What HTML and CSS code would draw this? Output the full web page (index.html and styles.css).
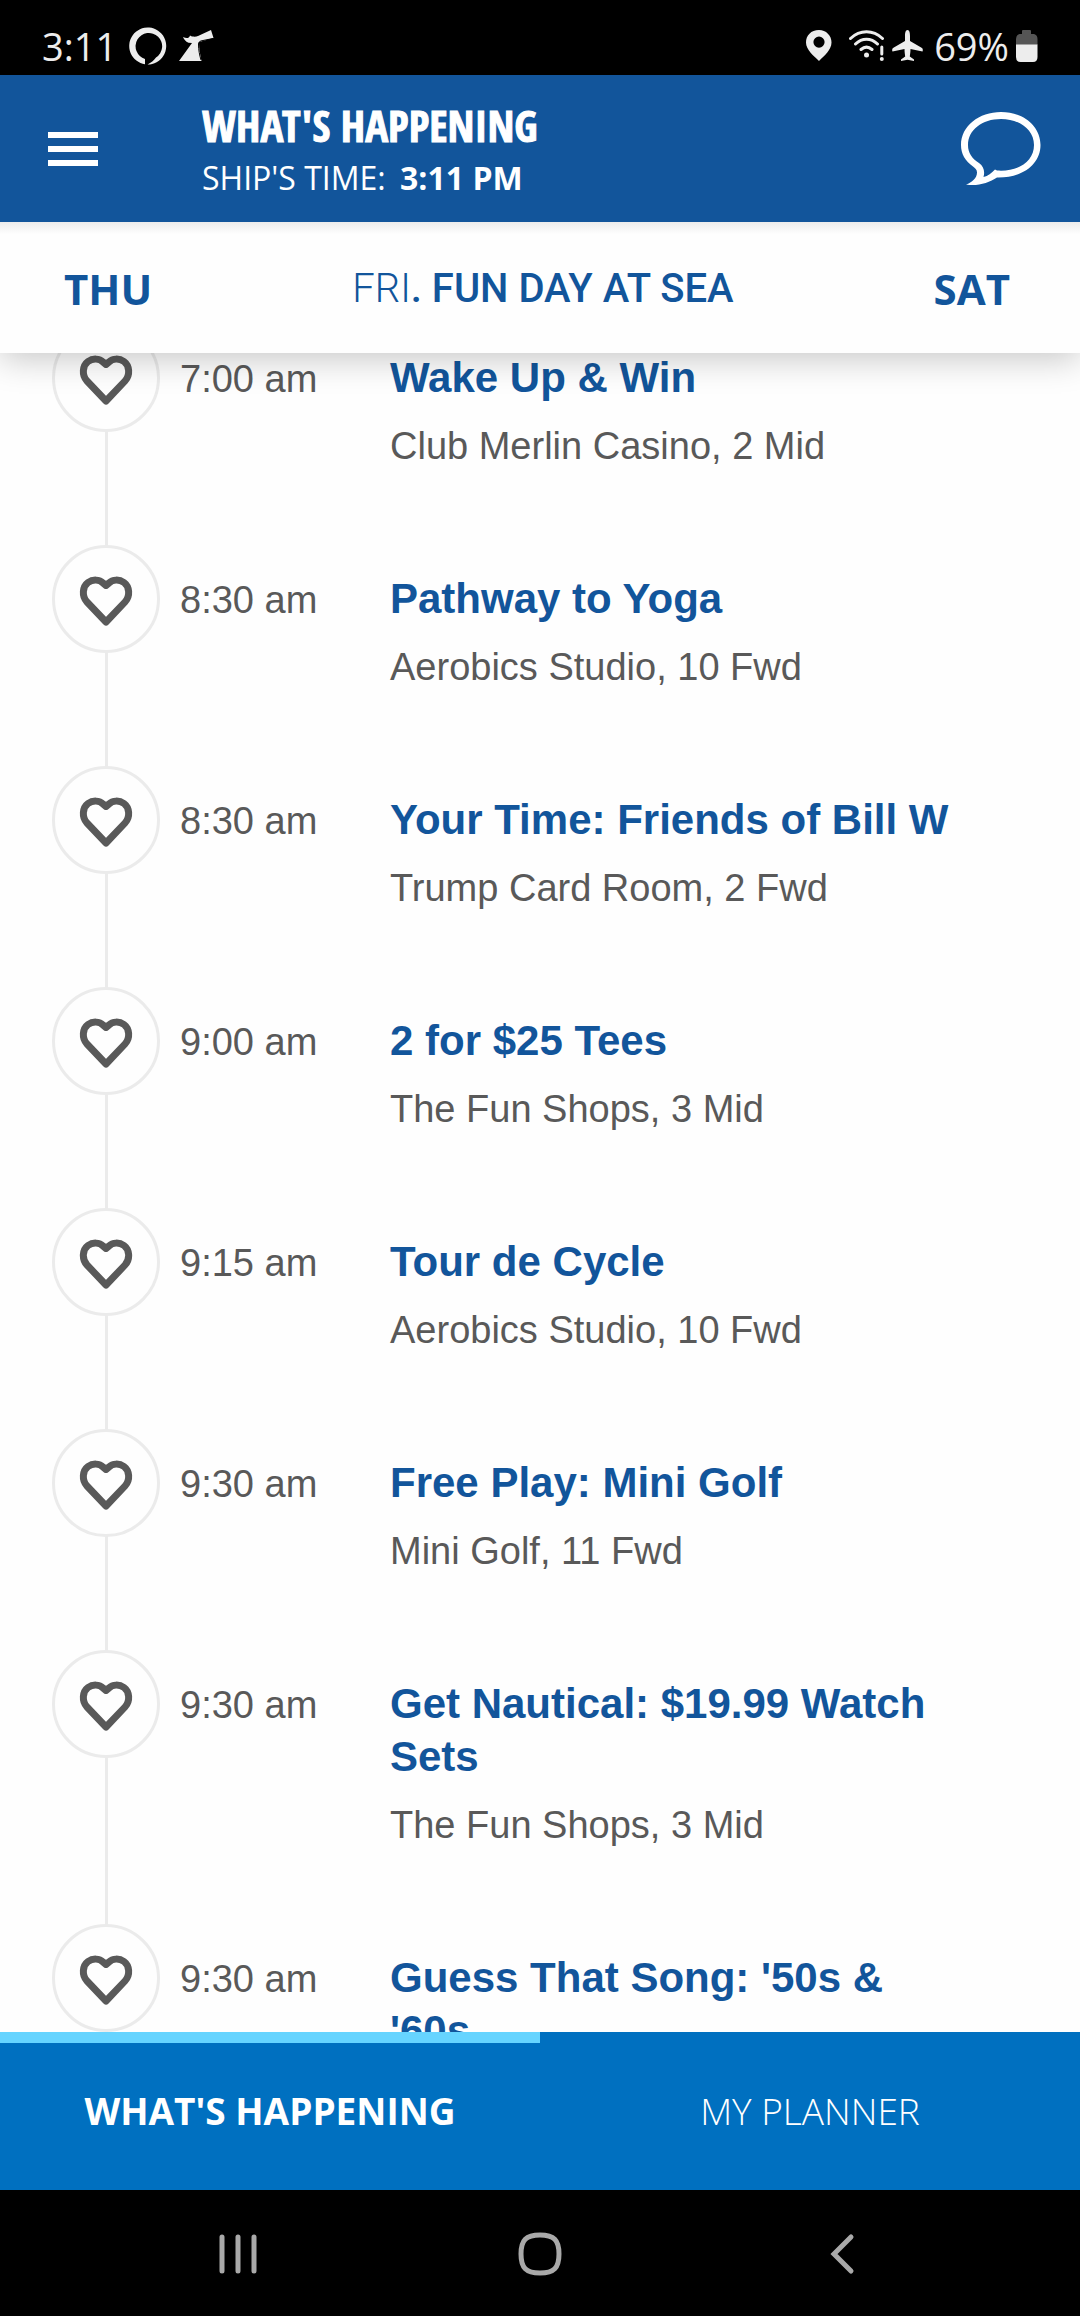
FILE: index.html
```html
<!DOCTYPE html>
<html lang="en">
<head>
<meta charset="utf-8">
<meta name="viewport" content="width=device-width, initial-scale=1">
<title>What's Happening</title>
<link rel="stylesheet" href="styles.css">
</head>
<body>
<svg class="sprite" aria-hidden="true">
  <symbol id="heart" viewBox="0 0 54 52">
    <path d="M27 47 8 27C2.500 21 3.500 11.500 9 7.500 14 4 20.500 4.500 24 8L27 10.500 30 8C33.500 4.500 40 4 45 7.500 50.500 11.500 51.500 21 46 27Z" fill="none" stroke="currentColor" stroke-width="7" stroke-linejoin="round"/>
  </symbol>
</svg>

<div class="status">
  <div class="status-group">
    <span class="clock">3:11</span>
    <svg width="38" height="38" viewBox="0 0 38 38"><path fill="#ededed" fill-rule="evenodd" d="M16 37.300A18.500 18.500 0 1 1 18.500 37.500C22 35.500 25 33.500 27 30.500A13.300 13.300 0 1 0 16 32Z"/></svg>
    <svg class="funnel" width="35" height="32" viewBox="0 0 35 32"><path fill="#ededed" d="M0 31 13 13 9.500 12.800C6.500 12 5 9 4 7 8 9 10.500 8 11 5.500 13 7 17 7 19 6L32 0 34.500 8 22 11.500 20 12C20 20 21.500 25 22.500 31Z"/><path d="M34 8.500 24 10.500Q19.500 11 19.500 14C19.500 20 20.500 25 22 30" fill="none" stroke="#000" stroke-width="1"/></svg>
  </div>
  <div class="status-group status-right">
    <svg width="26" height="32" viewBox="0 0 26 32"><path fill="#ededed" fill-rule="evenodd" d="M13 0C5 0 0 5.500 0 12.500 0 20 8 26 13 31 18 26 25.500 20 25.500 12.500 25.500 5.500 20 0 13 0Zm0 6.500a5.600 5.600 0 1 1 0 11.200 5.600 5.600 0 0 1 0-11.200Z"/></svg>
    <svg class="wifi" width="36" height="32" viewBox="0 0 36 32"><g fill="none" stroke="#ededed" stroke-width="3" stroke-linecap="round"><path d="M1.500 8.500C11-.5 24-.5 33.500 8.500M6.500 14C13 7.500 22 7.500 28.500 14M12 19.500C15.500 16.500 19.500 16.500 23 19.500M32.800 17V24"/></g><g fill="#ededed"><circle cx="17.500" cy="25" r="2.500"/><circle cx="32.800" cy="29" r="2"/></g></svg>
    <svg width="32" height="32" viewBox="0 0 32 32"><path fill="#ededed" d="M15.500 0C17.500 0 18 3 18 6V11L30 18C31 19 31 20.500 30.500 21.500L18.500 19C18.500 22 18 25 17.800 26.500L22 29.500V31L15.500 29.800 9 31V29.500L13.200 26.500C13 25 12.500 22 12.500 19L.5 21.500C0 20.500 0 19 1 18L13 11V6C13 3 13.500 0 15.500 0Z"/></svg>
    <span class="charge">69%</span>
    <svg width="22" height="34" viewBox="0 0 22 34"><path fill="#555" d="M6 5V2Q6 1 7 1H14Q15 1 15 2V5H18Q21.500 6 21.500 10V16H0V10Q0 6 3.500 5Z"/><path fill="#ededed" d="M0 15.500H21.500V28Q21.500 33 17 33H4.500Q0 33 0 28Z"/></svg>
  </div>
</div>

<header class="header">
  <button class="menu" aria-label="Menu"><span></span><span></span><span></span></button>
  <div class="heading">
    <h1>WHAT'S HAPPENING</h1>
    <p>SHIP'S TIME: <strong>3:11 PM</strong></p>
  </div>
  <button class="chat" aria-label="Messages">
    <svg width="80" height="74" viewBox="0 0 80 74"><path fill="#fff" fill-rule="evenodd" d="M40 0C62 0 79.500 14 79.500 33 79.500 52 62 66 36 65.500 28 71 16 74.500 5 72.500 11 70.500 16 66 16 60.500 16 57.500 14 56 12 54.500 4 48.500 0 42 0 33 0 14 18 0 40 0ZM40 7C21 7 7 18 7 33 7 41 11 46.500 18 51 23 54.500 24 60 22.500 65 27 64 30.500 61 34 57.500L36 58.500C58 60 73 49 73 33 73 18 59 7 40 7Z"/></svg>
  </button>
</header>

<nav class="days">
  <a href="#thu">THU</a>
  <h2><span>FRI</span>. FUN DAY AT SEA</h2>
  <a href="#sat">SAT</a>
</nav>

<main class="schedule">
  <ul class="events">
    <li class="event"><button class="fav" aria-label="Add to favorites"><svg><use href="#heart"/></svg></button><time>7:00 am</time><div class="info"><h3>Wake Up &amp; Win</h3><p>Club Merlin Casino, 2 Mid</p></div></li>
    <li class="event"><button class="fav" aria-label="Add to favorites"><svg><use href="#heart"/></svg></button><time>8:30 am</time><div class="info"><h3>Pathway to Yoga</h3><p>Aerobics Studio, 10 Fwd</p></div></li>
    <li class="event"><button class="fav" aria-label="Add to favorites"><svg><use href="#heart"/></svg></button><time>8:30 am</time><div class="info"><h3>Your Time: Friends of Bill W</h3><p>Trump Card Room, 2 Fwd</p></div></li>
    <li class="event"><button class="fav" aria-label="Add to favorites"><svg><use href="#heart"/></svg></button><time>9:00 am</time><div class="info"><h3>2 for $25 Tees</h3><p>The Fun Shops, 3 Mid</p></div></li>
    <li class="event"><button class="fav" aria-label="Add to favorites"><svg><use href="#heart"/></svg></button><time>9:15 am</time><div class="info"><h3>Tour de Cycle</h3><p>Aerobics Studio, 10 Fwd</p></div></li>
    <li class="event"><button class="fav" aria-label="Add to favorites"><svg><use href="#heart"/></svg></button><time>9:30 am</time><div class="info"><h3>Free Play: Mini Golf</h3><p>Mini Golf, 11 Fwd</p></div></li>
    <li class="event"><button class="fav" aria-label="Add to favorites"><svg><use href="#heart"/></svg></button><time>9:30 am</time><div class="info"><h3>Get Nautical: $19.99 Watch Sets</h3><p>The Fun Shops, 3 Mid</p></div></li>
    <li class="event"><button class="fav" aria-label="Add to favorites"><svg><use href="#heart"/></svg></button><time>9:30 am</time><div class="info"><h3>Guess That Song: '50s &amp;<br>'60s</h3></div></li>
  </ul>
</main>

<nav class="tabs">
  <a class="tab active" href="#happening">WHAT'S HAPPENING</a>
  <a class="tab" href="#planner">MY PLANNER</a>
</nav>

<div class="system">
  <button aria-label="Recent apps"><svg width="38" height="42" viewBox="0 0 38 42"><path d="M3 4V38M19 4V38M35 4V38" stroke="#a9a9a9" stroke-width="5" stroke-linecap="round"/></svg></button>
  <button aria-label="Home"><svg width="44" height="44" viewBox="0 0 44 44"><path d="M22 3C36 3 41 8 41 22S36 41 22 41 3 36 3 22 8 3 22 3Z" fill="none" stroke="#a9a9a9" stroke-width="5"/></svg></button>
  <button aria-label="Back"><svg width="26" height="42" viewBox="0 0 26 42"><path d="M22 4 5 21 22 38" fill="none" stroke="#a9a9a9" stroke-width="5" stroke-linecap="round"/></svg></button>
</div>
</body>
</html>
```

FILE: styles.css
```css
* { box-sizing: border-box; }

body {
  margin: 0;
  height: 100vh;
  display: flex;
  flex-direction: column;
  overflow: hidden;
  background: #fefefe;
  color: #595959;
  font-family: "Liberation Sans", Arial, sans-serif;
}

h1, h2, h3, p, ul { margin: 0; padding: 0; }
button { border: 0; padding: 0; background: none; color: inherit; font: inherit; }
a { color: inherit; text-decoration: none; }
svg { display: block; flex: none; }
.sprite { position: absolute; width: 0; height: 0; }

.status {
  flex: none;
  display: flex;
  justify-content: space-between;
  height: 75px;
  padding: 16px 42px 0 42px;
  background: #000;
  color: #ededed;
  font: 400 38px/56px "Open Sans", sans-serif;
}
.status-group { display: flex; align-items: center; gap: 12px; height: 60px; }
.status-right { gap: 7px; }
.clock { width: 75px; }
.wifi { margin-left: 10px; }
.charge { margin-left: 3px; }

.header {
  flex: none;
  z-index: 2;
  display: flex;
  align-items: center;
  height: 147px;
  padding: 0 39px 0 48px;
  background: #12559b;
  color: #fff;
}
.menu { display: grid; gap: 8px; width: 50px; }
.menu span { height: 6px; background: #fff; }
.heading { flex: 1; margin-left: 104px; padding-top: 5px; }
.heading h1 {
  font: 800 43px/54px "Open Sans Condensed", "Noto Sans ExtraCondensed", "Liberation Sans Narrow", "Roboto Condensed", "DejaVu Sans Condensed", sans-serif;
  -webkit-text-stroke: 1px #fff;
}
.heading p { font: 400 32px/50px "Open Sans", sans-serif; }
.heading strong { margin-left: 6px; }

.days {
  flex: none;
  z-index: 1;
  display: flex;
  align-items: center;
  justify-content: space-between;
  height: 131px;
  padding: 2px 70px 0 64px;
  background: linear-gradient(#ececec, #fefefe 12px);
  box-shadow: 0 6px 32px rgba(0, 0, 0, .22);
  color: #12559b;
  font: 700 42px/58px "Open Sans", sans-serif;
}
.days h2 { font: 500 40px/58px Roboto, sans-serif; }
.days span { font-weight: 300; }

.schedule { flex: 1; min-height: 0; overflow: hidden; }
.events { margin-top: -29px; list-style: none; }
.event {
  display: grid;
  grid-template-columns: 108px 190px 1fr;
  column-gap: 20px;
  padding: 0 100px 0 52px;
  background: linear-gradient(#ebebeb, #ebebeb) 105px 0 / 3px 100% no-repeat;
}
.fav {
  display: grid;
  place-items: center;
  width: 108px;
  height: 108px;
  border: 3px solid #ebebeb;
  border-radius: 50%;
  background: #fefefe;
}
.fav svg { width: 54px; height: 52px; margin-top: 4px; }
.event time { padding-top: 29px; font-size: 38px; line-height: 53px; }
.info { padding: 27px 0 72px; }
.info h3 { color: #12559b; font-size: 42px; line-height: 53px; }
.info p { margin-top: 16px; font-size: 38px; line-height: 53px; }

.tabs {
  flex: none;
  display: grid;
  grid-template-columns: 1fr 1fr;
  height: 158px;
  background: #0070c0;
  color: #fff;
}
.tab {
  border-top: 11px solid transparent;
  padding-top: 41px;
  text-align: center;
  font: 300 37px/54px "Open Sans", sans-serif;
}
.tab.active { border-color: #66d4ff; font-weight: 700; }

.system {
  flex: none;
  display: grid;
  grid-template-columns: repeat(3, 28%);
  justify-content: center;
  height: 126px;
  padding-top: 2px;
  background: #000;
}
.system button { display: grid; place-items: center; }
```
